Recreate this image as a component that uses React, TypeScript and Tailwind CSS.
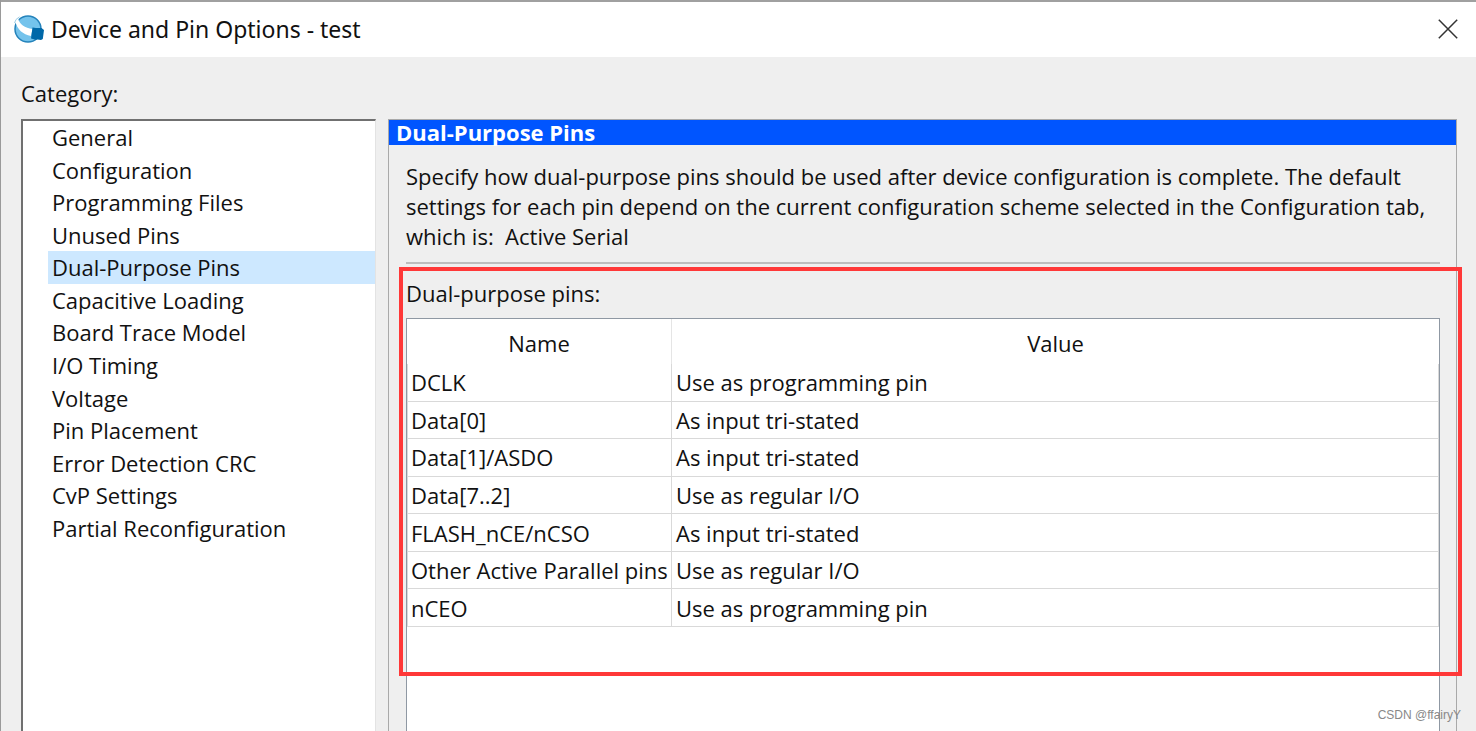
import React, { useState } from 'react';

interface PinSetting {
    name: string;
    value: string;
}

const CATEGORIES = [
    'General',
    'Configuration',
    'Programming Files',
    'Unused Pins',
    'Dual-Purpose Pins',
    'Capacitive Loading',
    'Board Trace Model',
    'I/O Timing',
    'Voltage',
    'Pin Placement',
    'Error Detection CRC',
    'CvP Settings',
    'Partial Reconfiguration',
];

const PINS: PinSetting[] = [
    { name: 'DCLK', value: 'Use as programming pin' },
    { name: 'Data[0]', value: 'As input tri-stated' },
    { name: 'Data[1]/ASDO', value: 'As input tri-stated' },
    { name: 'Data[7..2]', value: 'Use as regular I/O' },
    { name: 'FLASH_nCE/nCSO', value: 'As input tri-stated' },
    { name: 'Other Active Parallel pins', value: 'Use as regular I/O' },
    { name: 'nCEO', value: 'Use as programming pin' },
];

const AppLogo: React.FC = () => (
    <svg viewBox="0 0 32 30" className="h-[30px] w-8 shrink-0" aria-hidden="true">
        <circle cx="15" cy="15" r="13" fill="#74c3ec" stroke="#2583bb" strokeWidth="1.5" />
        <path d="M2.2 7 L5.2 4.5 C6 10 12 14 19.5 15 L18 22 C10 20.5 4 15.5 2.2 7 Z" fill="#fff" />
        <path d="M1.5 9 L3 5.5 L6.5 2.8" fill="none" stroke="#9ecfe8" strokeWidth="1" />
        <path d="M19.5 13.5 L23 14 L28.5 14 L31 16 L29.8 25 L28 26 L24.5 25.5 L23 25.8 L18 24.5 Z" fill="#0068a8" />
    </svg>
);

const TitleBar: React.FC = () => (
    <header className="flex h-[57px] shrink-0 items-center justify-between border-t-2 border-[#a0a0a0] bg-white pr-[18px] pb-[2px] pl-3">
        <div className="flex items-center gap-[6px]">
            <AppLogo />
            <h1 className="font-['Noto_Sans',sans-serif] text-[23px] leading-8">Device and Pin Options - test</h1>
        </div>
        <button type="button" aria-label="Close">
            <svg viewBox="0 0 20 20" className="size-5" aria-hidden="true">
                <path d="M0.8 0.8 L19.2 19.2 M19.2 0.8 L0.8 19.2" stroke="#333" strokeWidth="1.5" />
            </svg>
        </button>
    </header>
);

interface CategoryListProps {
    selected: string;
    onSelect: (category: string) => void;
}

const CategoryList: React.FC<CategoryListProps> = ({ selected, onSelect }) => (
    <nav
        aria-labelledby="category-label"
        className="w-[355px] shrink-0 border-t-2 border-r border-l-2 border-t-[#707070] border-r-[#e3e3e3] border-l-[#707070] bg-white"
    >
        <ul className="grid h-[423px] auto-rows-fr pl-[25px]">
            {CATEGORIES.map((category) => (
                <li key={category} className="grid">
                    <button
                        type="button"
                        onClick={() => onSelect(category)}
                        className={`pl-1 text-left leading-8 ${category === selected ? 'bg-[#cde8ff]' : ''}`}
                    >
                        {category}
                    </button>
                </li>
            ))}
        </ul>
    </nav>
);

const PinTable: React.FC = () => (
    <div className="flex-1 border border-b-0 border-[#8f98a3] bg-white">
        <table aria-labelledby="pins-label" className="w-full table-fixed border-separate border-spacing-0">
            <colgroup>
                <col className="w-[265px]" />
                <col />
            </colgroup>
            <thead>
                <tr className="h-[45px]">
                    <th className="border-r border-[#e5e5e5] pt-[2px] font-normal">Name</th>
                    <th className="pt-[2px] font-normal">Value</th>
                </tr>
            </thead>
            <tbody className="h-[263px]">
                {PINS.map((pin) => (
                    <tr key={pin.name}>
                        <td className="border-r border-b border-l border-[#d9d9d9] pl-[3px] whitespace-nowrap">{pin.name}</td>
                        <td className="border-r border-b border-[#d9d9d9] pl-1">{pin.value}</td>
                    </tr>
                ))}
            </tbody>
        </table>
    </div>
);

const DualPurposePanel: React.FC = () => (
    <section className="flex min-w-0 flex-1 flex-col border-t border-r border-l border-[#a9a9a9]">
        <h2 className="h-[25px] bg-[#0055ff] pl-[7px] leading-6 font-bold text-white">Dual-Purpose Pins</h2>
        <div className="flex flex-1 flex-col pt-4 pr-4 pl-[17px]">
            <p className="leading-[30px]">
                Specify how dual-purpose pins should be used after device configuration is complete. The default
                settings for each pin depend on the current configuration scheme selected in the Configuration tab,
                which is:&nbsp; Active Serial
            </p>
            <hr className="mt-[11px] border-t-2 border-[#bdbdbd]" />
            <div className="relative flex flex-1 flex-col pt-[14px]">
                <p id="pins-label" className="mb-[10px] leading-[30px]">
                    Dual-purpose pins:
                </p>
                <PinTable />
                {/* highlight frame over the table */}
                <div className="pointer-events-none absolute top-[3px] -right-[22px] -left-[7px] h-[409px] border-4 border-[#ff3838]" />
            </div>
        </div>
    </section>
);

export default function App() {
    const [selected, setSelected] = useState('Dual-Purpose Pins');

    return (
        <div className="relative flex h-screen min-h-[700px] flex-col overflow-hidden border-l border-[#9a9a9a] bg-[#efefef] font-['Open_Sans','Noto_Sans',sans-serif] text-[22px] leading-8 text-[#111]">
            <TitleBar />
            <main className="flex flex-1 flex-col pt-5 pr-[19px] pl-5">
                <p id="category-label" className="mb-[10px]">
                    Category:
                </p>
                <div className="flex flex-1 gap-3">
                    <CategoryList selected={selected} onSelect={setSelected} />
                    <DualPurposePanel />
                </div>
            </main>
            <span className="absolute right-[15px] bottom-2 font-['Liberation_Sans',sans-serif] text-xs leading-4 text-[#888]">
                CSDN @ffairyY
            </span>
        </div>
    );
}
